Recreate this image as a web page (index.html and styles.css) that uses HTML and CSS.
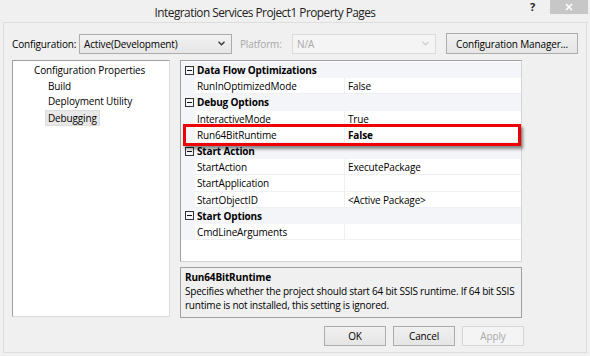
FILE: index.html
```html
<!DOCTYPE html>
<html>
<head>
<meta charset="utf-8">
<link rel="stylesheet" href="styles.css">
</head>
<body>
<div class="window">
  <div class="titlebar">
    <div class="title">Integration Services Project1 Property Pages</div>
    <div class="help">?</div>
    <div class="close"><svg width="10" height="10" viewBox="0 0 10 10"><path d="M2 2 L8 8 M8 2 L2 8" stroke="#fff" stroke-width="1.6"/></svg></div>
  </div>
  <div class="client">
    <div class="config-row">
      <span class="lbl">Configuration:</span>
      <div class="select">
        <span>Active(Development)</span>
        <svg class="chev" width="7" height="5" viewBox="0 0 7 5"><path d="M0.5 0.8 L3.5 3.8 L6.5 0.8" fill="none" stroke="#333" stroke-width="1.3"/></svg>
      </div>
      <span class="lbl lbl-dis">Platform:</span>
      <div class="select select-dis">
        <span>N/A</span>
        <svg class="chev" width="7" height="5" viewBox="0 0 7 5"><path d="M0.5 0.8 L3.5 3.8 L6.5 0.8" fill="none" stroke="#c4c4c4" stroke-width="1.1"/></svg>
      </div>
      <div class="btn btn-cfg">Configuration Manager...</div>
    </div>
    <div class="main">
      <div class="tree">
        <div class="node root">Configuration Properties</div>
        <div class="node child">Build</div>
        <div class="node child">Deployment Utility</div>
        <div class="node child"><span class="sel">Debugging</span></div>
      </div>
      <div class="right">
        <div class="grid">
          <div class="row cat"><span class="gut"><i class="minus"></i></span><span class="cname">Data Flow Optimizations</span></div>
          <div class="row prop"><span class="gut"></span><span class="name">RunInOptimizedMode</span><span class="val">False</span></div>
          <div class="row cat"><span class="gut"><i class="minus"></i></span><span class="cname">Debug Options</span></div>
          <div class="row prop"><span class="gut"></span><span class="name">InteractiveMode</span><span class="val">True</span></div>
          <div class="row prop"><span class="gut"></span><span class="name">Run64BitRuntime</span><span class="val bold">False</span></div>
          <div class="row cat"><span class="gut"><i class="minus"></i></span><span class="cname">Start Action</span></div>
          <div class="row prop"><span class="gut"></span><span class="name">StartAction</span><span class="val">ExecutePackage</span></div>
          <div class="row prop"><span class="gut"></span><span class="name">StartApplication</span><span class="val"></span></div>
          <div class="row prop"><span class="gut"></span><span class="name">StartObjectID</span><span class="val">&lt;Active Package&gt;</span></div>
          <div class="row cat"><span class="gut"><i class="minus"></i></span><span class="cname">Start Options</span></div>
          <div class="row prop"><span class="gut"></span><span class="name">CmdLineArguments</span><span class="val"></span></div>
          <div class="highlight"></div>
        </div>
        <div class="desc">
          <div class="desc-title">Run64BitRuntime</div>
          <div class="desc-text">Specifies whether the project should start 64 bit SSIS runtime. If 64 bit SSIS runtime is not installed, this setting is ignored.</div>
        </div>
        <div class="buttons">
          <div class="btn">OK</div>
          <div class="btn">Cancel</div>
          <div class="btn btn-dis">Apply</div>
        </div>
      </div>
    </div>
  </div>
</div>
</body>
</html>
```
FILE: styles.css
```css
* { box-sizing: border-box; }
html, body { margin: 0; padding: 0; }
body {
  width: 590px;
  height: 356px;
  background: #f0f0f0;
  font-family: "Open Sans", "Noto Sans", "Liberation Sans", sans-serif;
  font-size: 10px;
  letter-spacing: -0.15px;
  color: #000;
  overflow: hidden;
}
.window {
  height: 356px;
  display: flex;
  flex-direction: column;
}
.titlebar {
  height: 22px;
  display: flex;
  align-items: flex-start;
}
.title {
  flex: 1;
  text-align: center;
  font-size: 11.8px;
  letter-spacing: -0.5px;
  line-height: 22px;
  color: #222;
  padding-top: 1px;
}
.help {
  width: 20px;
  font-weight: bold;
  font-size: 11px;
  line-height: 12px;
  color: #222;
  margin-top: 1px;
}
.close {
  width: 38px;
  height: 14px;
  margin-right: 2px;
  background: #c7c7c7;
  display: flex;
  align-items: center;
  justify-content: center;
}
.client {
  flex: 1;
  margin: 0 3px 3px 3px;
  border: 1px solid #dedede;
  padding: 10px 0 0 8px;
}
.config-row {
  display: flex;
  align-items: center;
  height: 21px;
}
.lbl { width: 67px; }
.lbl-dis { width: 52px; margin-left: 8px; color: #a8a8a8; }
.select {
  width: 153px;
  height: 20px;
  border: 1px solid #acacac;
  background: linear-gradient(#f2f2f2, #e6e6e6);
  display: flex;
  align-items: center;
  justify-content: space-between;
  padding: 0 6px 0 4px;
}
.select-dis {
  width: 144px;
  border-color: #d9d9d9;
  background: #f4f4f4;
  color: #a8a8a8;
}
.btn {
  height: 20px;
  border: 1px solid #acacac;
  background: linear-gradient(#f0f0f0, #e5e5e5);
  display: flex;
  align-items: center;
  justify-content: center;
  width: 62px;
}
.btn-cfg {
  width: 132px;
  height: 21px;
  margin-left: 10px;
}
.btn-dis {
  color: #a8a8a8;
  border-color: #d5d5d5;
  background: #f4f4f4;
}
.main {
  margin-top: 6px;
  display: flex;
  align-items: flex-start;
  gap: 10px;
}
.tree {
  width: 158px;
  height: 257px;
  background: #fff;
  border: 1px solid #a0a0a0;
  border-right-color: #dcdcdc;
  border-bottom-color: #dcdcdc;
  padding-top: 2px;
}
.node { height: 15.5px; line-height: 15.5px; white-space: nowrap; }
.root { padding-left: 21px; }
.child { padding-left: 35px; }
.sel {
  display: inline-block;
  background: #e8e8e8;
  border: 1px solid #dcdcdc;
  padding: 0 2px;
  line-height: 14px;
  margin-left: -3px;
}
.right {
  width: 344px;
}
.grid {
  position: relative;
  width: 342px;
  height: 202px;
  background: #fff;
  border: 1px solid #a0a0a0;
  border-right-color: #d4d4d4;
  border-bottom-color: #d4d4d4;
  padding-top: 1px;
}
.row {
  display: flex;
  height: 16.2px;
  align-items: stretch;
}
.cat { background: #f3f5f9; }
.gut {
  width: 14px;
  flex: none;
  background: #f3f5f9;
  display: flex;
  align-items: center;
  justify-content: center;
  padding-left: 2px;
}
.minus {
  display: block;
  width: 9px;
  height: 9px;
  border: 1px solid #333;
  position: relative;
}
.minus::after {
  content: "";
  position: absolute;
  left: 1px;
  right: 1px;
  top: 3px;
  height: 1px;
  background: #111;
}
.cname {
  font-weight: bold;
  padding-left: 2px;
  line-height: 16px;
}
.name {
  width: 150px;
  flex: none;
  padding-left: 2px;
  line-height: 16px;
  border-bottom: 1px solid #eef0f3;
  border-right: 1px solid #eef0f3;
}
.val {
  flex: 1;
  padding-left: 3px;
  line-height: 16px;
  border-bottom: 1px solid #eef0f3;
}
.bold { font-weight: bold; }
.highlight {
  position: absolute;
  left: 2px;
  top: 63px;
  width: 338px;
  height: 22px;
  border: 3.5px solid #f00000;
  box-shadow: 2px 3px 3px rgba(0,0,0,0.45);
}
.desc {
  margin-top: 5px;
  width: 342px;
  height: 51px;
  border: 1px solid #a0a0a0;
  background: #f0f0f0;
  padding: 2px 1px 2px 4px;
  line-height: 14px;
}
.desc-title { font-weight: bold; }
.desc-text { letter-spacing: -0.22px; }
.buttons {
  display: flex;
  gap: 7px;
  margin-top: 8px;
  padding-left: 144px;
}
```
